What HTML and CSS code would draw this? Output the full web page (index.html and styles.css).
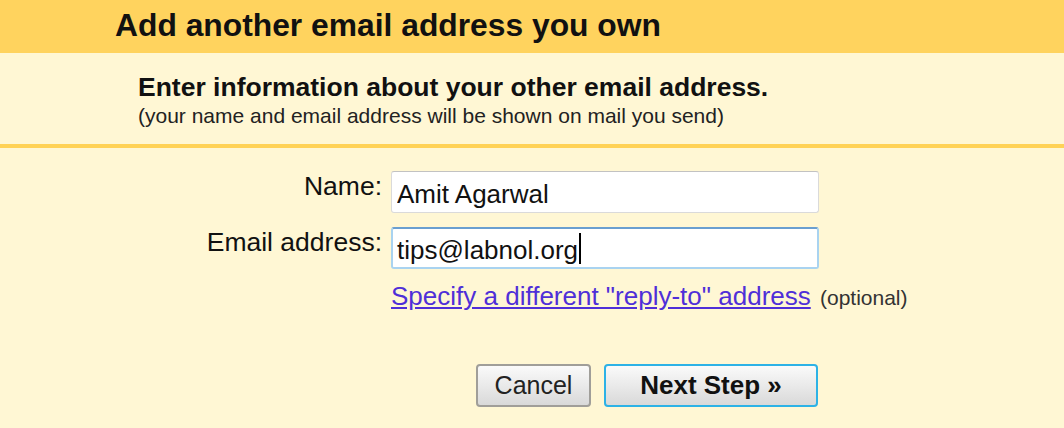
FILE: index.html
```html
<!DOCTYPE html>
<html lang="en">

<head>
    <meta charset="UTF-8">
    <meta name="viewport" content="width=device-width, initial-scale=1.0">
    <title>Add another email address you own</title>
    <link rel="stylesheet" href="styles.css">
</head>

<body>
    <div class="title-bar">
        <h1>Add another email address you own</h1>
    </div>

    <div class="intro">
        <h2>Enter information about your other email address.</h2>
        <p class="hint">(your name and email address will be shown on mail you send)</p>
    </div>

    <form class="address-form">
        <div class="form-row">
            <label class="field-label" for="name">Name:</label>
            <input type="text" class="field-input" id="name" value="Amit Agarwal">
        </div>
        <div class="form-row">
            <label class="field-label" for="email">Email address:</label>
            <div class="field-input focused" id="email"><span>tips@labnol.org</span><span class="caret"></span></div>
        </div>
        <div class="form-row link-row">
            <span class="field-label"></span>
            <div class="reply-to">
                <a href="#" class="reply-link">Specify a different "reply-to" address</a>
                <span class="optional">(optional)</span>
            </div>
        </div>

        <div class="actions">
            <button type="button" class="btn">Cancel</button>
            <button type="button" class="btn primary">Next Step &raquo;</button>
        </div>
    </form>
</body>
</html>
```

FILE: styles.css
```css
body {
    margin: 0;
    background-color: #fff7d4;
    font-family: "Liberation Sans", Arial, sans-serif;
    color: #000;
}

.title-bar {
    background-color: #ffd35e;
    height: 53px;
    padding-left: 115px;
    box-sizing: border-box;
}

.title-bar h1 {
    margin: 0;
    font-size: 31.8px;
    line-height: 51px;
    font-weight: bold;
    color: #111;
}

.intro {
    height: 95px;
    box-sizing: border-box;
    padding: 19px 0 0 138px;
    border-bottom: 4px solid #ffd256;
}

.intro h2 {
    margin: 0;
    font-size: 26.5px;
    line-height: 30px;
    font-weight: bold;
    color: #111;
}

.hint {
    margin: 0;
    padding-top: 2px;
    font-size: 21px;
    line-height: 24px;
    color: #222;
}

.address-form {
    padding-top: 23px;
}

.form-row {
    display: flex;
    align-items: flex-start;
    gap: 9px;
    margin-bottom: 14px;
}

.field-label {
    width: 382px;
    flex-shrink: 0;
    text-align: right;
    font-size: 26.5px;
    line-height: 30px;
    color: #111;
}

.field-input {
    width: 428px;
    height: 42px;
    box-sizing: border-box;
    border: 1px solid #dadada;
    border-top-color: #c2c2c2;
    border-radius: 3px;
    background: #fff;
    padding: 4px 5px 0;
    font-family: "Liberation Sans", Arial, sans-serif;
    font-size: 26px;
    color: #111;
    display: flex;
    align-items: center;
}

.field-input.focused {
    border: 2px solid #a9d3f0;
    border-top-color: #6a9fd0;
    padding: 4px 4px 0;
}

.caret {
    display: inline-block;
    width: 2px;
    height: 31px;
    background: #000;
    margin: -4px 0 0 1px;
}

.link-row {
    margin-top: -2px;
}

.reply-to {
    font-size: 26px;
    line-height: 30px;
    white-space: nowrap;
}

.reply-link {
    color: #4f2fd8;
    text-decoration: underline;
}

.optional {
    font-size: 21px;
    color: #333;
    margin-left: 2px;
}

.actions {
    display: flex;
    gap: 13px;
    padding-left: 476px;
    margin-top: 51px;
}

.btn {
    width: 115px;
    height: 43px;
    box-sizing: border-box;
    padding: 0;
    border: 2px solid #a09e99;
    border-radius: 4px;
    background: linear-gradient(#fafafa, #e8e8e8 55%, #d9d9d9);
    font-family: "Liberation Sans", Arial, sans-serif;
    font-size: 25px;
    color: #222;
}

.btn.primary {
    width: 214px;
    font-size: 26px;
    font-weight: bold;
    border-color: #2db2e6;
    color: #111;
}
```
